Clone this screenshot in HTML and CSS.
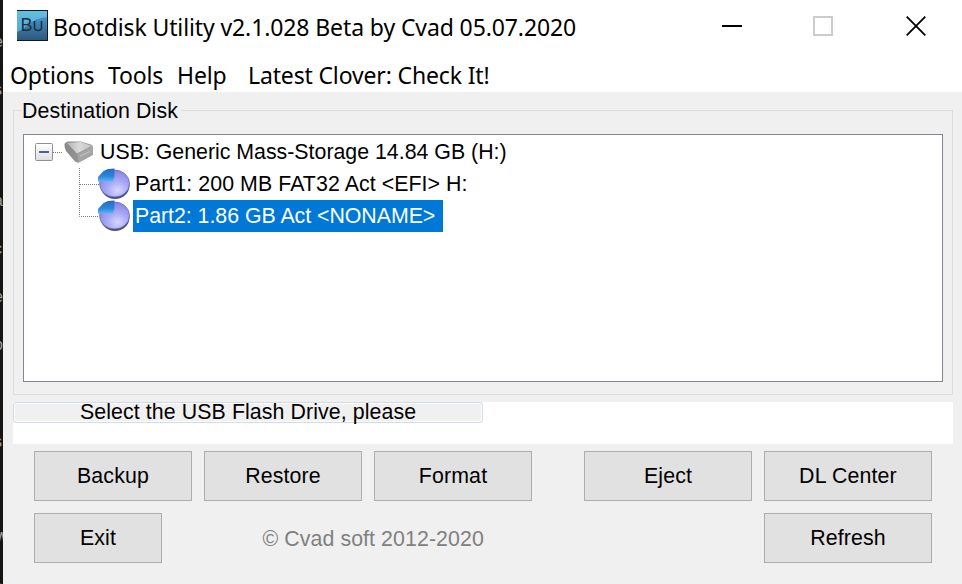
FILE: index.html
```html
<!DOCTYPE html>
<html lang="en">
<head>
<meta charset="utf-8">
<title>Bootdisk Utility</title>
<link rel="stylesheet" href="styles.css">
</head>
<body>
<div class="backdrop" aria-hidden="true"><i>e</i><i>s</i><i class="gap"></i><i>a</i><i>c</i><i>e</i><i>o</i><i></i><i>s</i><i></i><i>W</i><i>s</i></div>
<main class="window">
  <header class="titlebar">
    <svg class="app-icon" width="31" height="31" viewBox="0 0 31 31">
      <defs><linearGradient id="ig" x1="0" y1="0" x2="0" y2="1"><stop offset="0" stop-color="#63bfe0"/><stop offset="1" stop-color="#4f9fce"/></linearGradient>
      <linearGradient id="ib" x1="0" y1="0" x2="0" y2="1"><stop offset="0" stop-color="#4793c8"/><stop offset="1" stop-color="#2d587c"/></linearGradient></defs>
      <rect width="31" height="31" fill="#10181f"/><rect y="1" width="30" height="29" fill="url(#ig)"/>
      <path d="M0 22Q6 20 11 15Q18 8 30 7V30H0Z" fill="url(#ib)"/>
      <text x="3.5" y="21" class="app-icon-text">B</text>
      <path d="M17.500 11V17.500Q17.500 20.500 21 20.500Q24.500 20.500 24.500 17.500V11" fill="none" stroke="#1c303f" stroke-width="1.600"/>
    </svg>
    <h1 class="title">Bootdisk Utility v2.1.028 Beta by Cvad 05.07.2020</h1>
    <div class="controls">
      <svg width="20" height="20" viewBox="0 0 20 20"><path d="M0 10H20" stroke="#000" stroke-width="2"/></svg>
      <svg width="20" height="20" viewBox="0 0 20 20"><path d="M1 1H19V19H1Z" fill="none" stroke="#ccc" stroke-width="2"/></svg>
      <svg class="close" width="20" height="20" viewBox="0 0 20 20"><path d="M.7.7L19.3 19.3M19.3.7L.7 19.3" stroke="#000" stroke-width="1.8"/></svg>
    </div>
  </header>
  <nav class="menu"><span class="options">Options</span><span class="tools">Tools</span><span class="help">Help</span><span class="latest">Latest Clover: Check It!</span></nav>
  <fieldset class="group">
    <legend>Destination Disk</legend>
    <div class="tree">
      <div class="row root">
        <svg width="62" height="32" viewBox="0 0 62 32">
          <defs><linearGradient id="tg" x1="0" y1="0" x2="0" y2="1"><stop offset="0" stop-color="#fff"/><stop offset="1" stop-color="#dedede"/></linearGradient>
          <linearGradient id="dt" x1="0" y1="0" x2="1" y2="0"><stop offset="0" stop-color="#b4b4b4"/><stop offset=".5" stop-color="#dadada"/><stop offset="1" stop-color="#c2c2c2"/></linearGradient>
          <linearGradient id="df" x1="0" y1="0" x2="1" y2="0"><stop offset="0" stop-color="#888"/><stop offset="1" stop-color="#a2a2a2"/></linearGradient></defs>
          <rect x="1.5" y="7.500" width="17" height="17" rx="1" fill="url(#tg)" stroke="#919191"/>
          <path d="M5 16H15" stroke="#4560a8" stroke-width="2"/>
          <path d="M19 16.500H29" stroke="#777" stroke-dasharray="1 1"/>
          <path d="M30.500 8Q31 6 34 5.500L47 5.500L57 8.500Q59.500 10 59 13V19L45 26.500Q43 27 41 25.500L32 15Q30 11 30.500 8Z" fill="url(#df)"/>
          <path d="M33 7L47 6L57.500 10L43 17.500Z" fill="url(#dt)"/>
          <path d="M43.500 18L58.500 11V18L44.500 26Z" fill="#a6a6a6"/>
          <path d="M46 20L56 15.500" stroke="#c5c5c5"/>
        </svg>
        <span class="label">USB: Generic Mass-Storage 14.84 GB (H:)</span>
      </div>
      <div class="row child">
        <svg width="54" height="32" viewBox="0 0 54 32">
          <defs><radialGradient id="pg" cx=".6" cy=".75" r=".75"><stop offset="0" stop-color="#d5d9ff"/><stop offset=".45" stop-color="#aaabf7"/><stop offset="1" stop-color="#8581e2"/></radialGradient>
          <linearGradient id="pb" x1="0" y1="0" x2="0" y2="1"><stop offset="0" stop-color="#1f6cc4"/><stop offset=".6" stop-color="#2f86d8"/><stop offset="1" stop-color="#5db4f4"/></linearGradient></defs>
          <path d="M3.500 0V32M4 16.500H23" fill="none" stroke="#777" stroke-dasharray="1 1"/>
          <g id="pie"><ellipse cx="39" cy="17.500" rx="14.500" ry="13.500" fill="#48517c"/><ellipse cx="38.500" cy="15.500" rx="15" ry="13.500" fill="url(#pg)" stroke="#6460b5" stroke-width=".7"/>
          <path d="M22 13.500V9L27.500 3L32 1L38.500 .5V8L37 13.500Z" fill="url(#pb)"/></g>
        </svg>
        <span class="label spaced">Part1: 200 MB FAT32 Act &lt;EFI&gt; H:</span>
      </div>
      <div class="row child">
        <svg width="54" height="32" viewBox="0 0 54 32"><path d="M3.500 0V16.500H23" fill="none" stroke="#777" stroke-dasharray="1 1"/><use href="#pie"/></svg>
        <span class="label selected">Part2: 1.86 GB Act &lt;NONAME&gt;</span>
      </div>
    </div>
  </fieldset>
  <section class="status"><div class="progress"><span>Select the USB Flash Drive, please</span></div></section>
  <section class="actions">
    <button class="backup">Backup</button><button class="restore">Restore</button><button class="format">Format</button><button class="eject">Eject</button><button class="dl">DL Center</button>
    <button class="exit">Exit</button><span class="copyright">© Cvad soft 2012-2020</span><button class="refresh">Refresh</button>
  </section>
</main>
</body>
</html>
```

FILE: styles.css
```css
* { box-sizing: border-box; }
body { margin: 0; width: 962px; height: 584px; overflow: hidden; display: flex; background: #f0f0f0; color: #000; font: 21.33px/32px "Liberation Sans", sans-serif; }
.backdrop { width: 3px; height: 584px; background: #151515; flex: none; overflow: hidden; padding-top: 19px; }
.backdrop i { display: block; height: 48.3px; width: 12px; margin-left: -6px; font: normal 16px/46px "Liberation Sans", sans-serif; color: #9aa0a6; }
.backdrop .gap { height: 62px; }
.window { width: 959px; display: flex; flex-direction: column; background: #f0f0f0; }
.titlebar { height: 60px; flex: none; background: #fff; display: flex; align-items: flex-start; padding: 10px 36px 0 14px; }
.app-icon { flex: none; }
.app-icon-text { font: 18px "Liberation Sans", sans-serif; fill: #1c303f; }
.title { font: 400 23px/32px "Noto Sans", sans-serif; letter-spacing: -.11px; margin: 1px 0 0 5px; white-space: nowrap; }
.controls { margin-left: auto; display: flex; gap: 71px; padding-top: 6px; }
.controls svg { display: block; }
.controls .close { margin-left: 2px; }
.menu { height: 32px; flex: none; background: #fff; display: flex; padding-left: 7px; font: 23px/30px "Noto Sans", sans-serif; letter-spacing: -.15px; white-space: nowrap; }
.menu span { flex: none; }
.options { width: 98px; }
.tools { width: 69px; }
.help { width: 71px; }
.group { margin: 5px 9px 0 10px; padding: 0 9px 12px; height: 298px; border: 1px solid #dcdcdc; flex: none; min-width: 0; }
.group legend { padding: 2px 3px 0 0; margin-left: -1px; line-height: 25px; height: 27px; letter-spacing: .12px; }
.tree { height: 248px; margin-top: 10px; border: 1px solid #828790; background: #fff; padding: 1px 0 0 10px; }
.row { height: 32px; display: flex; white-space: nowrap; }
.row svg { flex: none; display: block; }
.root .label { margin-left: 4px; }
.child { padding-left: 42px; }
.child .label { margin-left: 3px; padding: 0 2px; }
.spaced { letter-spacing: .07px; }
.child .selected { background: #0078d7; color: #fff; width: 310px; letter-spacing: -.03px; }
.status { margin: 7px 9px 0 10px; height: 42px; background: #fff; flex: none; }
.progress { width: 470px; height: 21px; border: 1px solid #d0dbe5; border-radius: 3px; background: #f0f0f0; box-shadow: inset 0 0 0 1px #fff; line-height: 18px; padding-left: 66px; letter-spacing: .09px; white-space: nowrap; }
.actions { display: grid; grid-template-columns: 158px 158px 158px 168px 168px; grid-template-rows: 50px 50px; column-gap: 12px; row-gap: 12px; padding: 7px 30px 0 31px; }
.actions button { font: inherit; letter-spacing: .15px; color: #000; background: #e1e1e1; border: 1px solid #adadad; border-radius: 0; padding: 0; white-space: nowrap; }
.eject, .dl, .refresh { margin-left: 40px; margin-right: -40px; }
.exit { width: 128px; }
.copyright { grid-column: 2 / 5; padding-left: 58.5px; line-height: 52px; color: #808080; letter-spacing: .08px; }
.refresh { grid-column: 5; }
```
